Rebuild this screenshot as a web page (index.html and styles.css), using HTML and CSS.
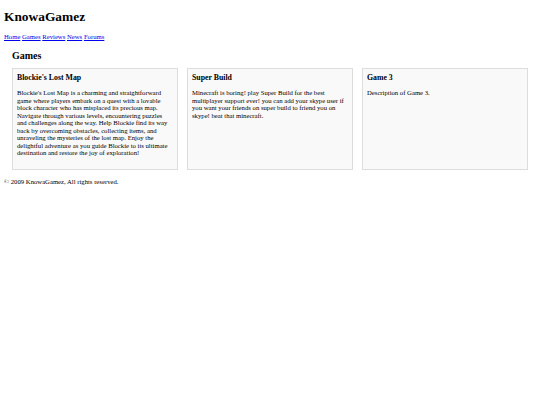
FILE: index.html
```html
<!DOCTYPE html>
<html lang="en">
<head>
  <meta charset="UTF-8" />
  <title>KnowaGamez</title>
  <link rel="stylesheet" href="styles.css">
</head>
<body>
  <header>
    <h1>KnowaGamez</h1>
    <nav>
      <a href="#">Home</a>
      <a href="#">Games</a>
      <a href="#">Reviews</a>
      <a href="#">News</a>
      <a href="#">Forums</a>
    </nav>
  </header>

  <section class="games">
    <h2>Games</h2>
    <div class="game-list">
      <div class="game">
        <h3>Blockie's Lost Map</h3>
        <p>Blockie's Lost Map is a charming and straightforward game where players embark on a quest with a lovable block character who has misplaced its precious map. Navigate through various levels, encountering puzzles and challenges along the way. Help Blockie find its way back by overcoming obstacles, collecting items, and unraveling the mysteries of the lost map. Enjoy the delightful adventure as you guide Blockie to its ultimate destination and restore the joy of exploration!</p>
      </div>
      <div class="game">
        <h3>Super Build</h3>
        <p>Minecraft is boring! play Super Build for the best multiplayer support ever! you can add your skype user if you want your friends on super build to friend you on skype! beat that minecraft.</p>
      </div>
      <div class="game">
        <h3>Game 3</h3>
        <p>Description of Game 3.</p>
      </div>
    </div>
  </section>

  <footer>
    <p>&copy; 2009 KnowaGamez, All rights reserved.</p>
  </footer>
</body>
</html>
```

FILE: styles.css
```css
body {
  font-family: 'Liberation Serif', 'Times New Roman', serif;
  font-size: 6.7px;
  margin: 4px;
  color: #000;
}
h1 {
  font-size: 13.4px;
  margin: 5px 0 8px;
}
nav a {
  color: #0000ee;
}
.games {
  padding: 0 8px;
}
h2 {
  font-size: 10px;
  margin: 9.5px 0 7.5px;
}
.game-list {
  display: grid;
  grid-template-columns: repeat(3, 1fr);
  gap: 9px;
}
.game {
  background-color: #f9f9f9;
  border: 1px solid #ddd;
  padding: 4px;
}
.game h3 {
  font-size: 7.8px;
  margin: 0 0 7px;
}
.game p {
  line-height: 7.5px;
  margin: 0 0 8px;
}
footer p {
  margin: 8px 0;
}
```
